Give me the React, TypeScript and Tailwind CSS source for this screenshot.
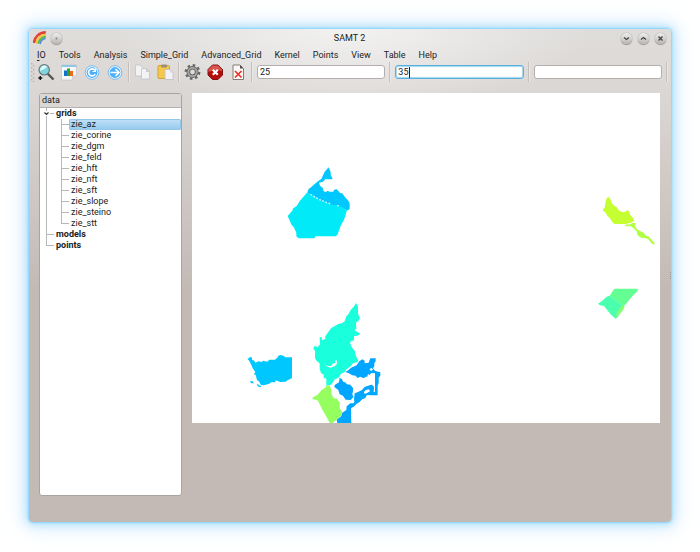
import React from "react";

const menus = ["Tools", "Analysis", "Simple_Grid", "Advanced_Grid", "Kernel", "Points", "View", "Table", "Help"];
const grids = ["zie_az", "zie_corine", "zie_dgm", "zie_feld", "zie_hft", "zie_nft", "zie_sft", "zie_slope", "zie_steino", "zie_stt"];

function RainbowIcon() {
  return (
    <svg viewBox="0 0 14 14" className="size-[14px]" fill="none" strokeWidth="2">
      <path d="M1 12C1.500 6 6 1.800 12.800 1.400" stroke="#e2403a" strokeWidth="2.600" />
      <path d="M3.300 12.300C4 7 7.500 4.200 12.800 3.600" stroke="#f6c93c" />
      <path d="M5.200 12.600C6 8.500 8.500 6.200 12.800 5.400" stroke="#62b54c" />
      <path d="M7 13C7.500 10 9.500 8 12.600 7.200" stroke="#5487d8" strokeWidth="1.600" />
    </svg>
  );
}

function RoundButton({ label, children }: { label: string; children: React.ReactNode }) {
  return (
    <button
      aria-label={label}
      className="flex size-[11px] items-center justify-center rounded-full bg-linear-to-b from-[#f0efee] to-[#b9b5b2] shadow-[0_1px_1px_#77777799,0_0_1px_#666]"
    >
      <svg viewBox="0 0 11 11" className="size-[11px]" fill="none" stroke="#444" strokeWidth="1.300">
        {children}
      </svg>
    </button>
  );
}

function ToolButton({ label, children }: { label: string; children: React.ReactNode }) {
  return (
    <button aria-label={label} className="size-[18px] shrink-0">
      <svg viewBox="0 0 18 18" className="size-[18px]">
        {children}
      </svg>
    </button>
  );
}

function Separator() {
  return <div className="mx-1 h-5 w-px shrink-0 bg-[#c4bfbc] shadow-[1px_0_0_#ebe9e7]" />;
}

function BlueDisc({ children }: { children: React.ReactNode }) {
  return (
    <>
      <circle cx="9" cy="9.500" r="6.800" fill="#f2faff" stroke="#79b9f0" strokeWidth="1" />
      <circle cx="9" cy="9.500" r="5.400" fill="#4db0fa" />
      <g fill="none" stroke="#fff" strokeWidth="1.600" transform="translate(0 .5)">
        {children}
      </g>
    </>
  );
}

function Toolbar() {
  const field = "h-[14px] w-full rounded-[3px] border bg-white px-[2px] text-[9px] leading-3 text-[#222] outline-none";
  return (
    <div className="flex items-center pl-[2px]" role="toolbar">
      <svg viewBox="0 0 4 20" className="mr-[2px] h-5 w-1 shrink-0" fill="#bab5b2">
        {[1, 5, 9, 13, 17].map((y) => (
          <g key={y}>
            <rect x="0" y={y} width="1.500" height="1.500" />
            <rect x="2" y={y + 2} width="1.500" height="1.500" />
          </g>
        ))}
      </svg>
      <div className="flex gap-[5px]">
        <ToolButton label="Zoom">
          <path d="M10.500 10.500L16.500 16.500" stroke="#555" strokeWidth="2.400" />
          <circle cx="7.200" cy="6.800" r="5.200" fill="#7ed6dc" stroke="#6b7779" strokeWidth="1.200" />
          <path d="M3 8C3 3.500 7 1.500 10 3.200C9 6 5.500 6.500 3 8Z" fill="#dffafa" />
          <path d="M3.300 13V17M1.300 15H5.300" stroke="#111" strokeWidth="1.400" />
        </ToolButton>
        <ToolButton label="Chart">
          <path d="M1.500 2H16.500V12L12 17H1.500Z" fill="#f7f7f7" stroke="#c8c8c8" strokeWidth=".8" />
          <path d="M1.500 2H16.500V4H1.500Z" fill="#8fc7ea" />
          <path d="M12 17V12.500H16.500Z" fill="#d5d5d5" />
          <path d="M4 7.500H7V13H4Z" fill="#1470c8" />
          <path d="M7 5.500H10V13H7Z" fill="#27a52e" />
          <path d="M10 8H13V13H10Z" fill="#ed6918" />
        </ToolButton>
        <ToolButton label="Reload">
          <BlueDisc>
            <path d="M11.800 6.700A3.500 3.500 0 1 0 12.200 10.500" />
            <path d="M12.400 5V8H9.500" strokeWidth="1.200" />
          </BlueDisc>
        </ToolButton>
        <ToolButton label="Forward">
          <BlueDisc>
            <path d="M4.500 9H13M9.500 5.500L13 9L9.500 12.500" />
          </BlueDisc>
        </ToolButton>
      </div>
      <Separator />
      <div className="flex gap-[5px]">
        <ToolButton label="Copy">
          <g fill="#f3f3f6" stroke="#c2c2ca" strokeWidth=".8">
            <path d="M2.500 2H7L9.500 4.500V13H2.500Z" />
            <path d="M8.500 5.500H13.500L16.500 8.500V16H8.500Z" />
            <path d="M13.500 5.500V8.500H16.500" fill="#d0d0d8" />
          </g>
        </ToolButton>
        <ToolButton label="Paste">
          <rect x="2" y="2.500" width="11.500" height="13" rx="1" fill="#f3c84b" stroke="#d3a234" />
          <rect x="5" y="1.500" width="6" height="3" rx="1" fill="#9a9078" />
          <path d="M9 6.500H14L17 9.500V16.500H9Z" fill="#f3f3f7" stroke="#bdbdc7" strokeWidth=".8" />
          <path d="M14 6.500V9.500H17" fill="#d4d4dc" />
        </ToolButton>
      </div>
      <Separator />
      <div className="flex gap-[5px]">
        <ToolButton label="Settings">
          <g fill="none" stroke="#666">
            <circle cx="9.500" cy="9" r="6.800" strokeWidth="2.200" strokeDasharray="2.600 2.740" />
            <circle cx="9.500" cy="9" r="4.200" stroke="#5d5d5d" strokeWidth="3.600" />
            <circle cx="9.500" cy="9" r="4.200" stroke="#a4a4a4" strokeWidth="2" />
          </g>
        </ToolButton>
        <ToolButton label="Stop">
          <path d="M6.500 2H12L16.500 6.500V12L12 16.500H6.500L2 12V6.500Z" fill="#b60c0c" stroke="#7d1414" />
          <path d="M6.500 2.500H12L16 6.500V8C11 6 7 7 2.500 9V6.500Z" fill="#d8554e" />
          <path d="M6.800 6.700L11.800 11.700M11.800 6.700L6.800 11.700" stroke="#fff" strokeWidth="2.200" />
        </ToolButton>
        <ToolButton label="Delete">
          <path d="M4 2H11L14.500 5.500V16.500H4Z" fill="#faf8f6" stroke="#857d75" />
          <path d="M11 2V5.500H14.500Z" fill="#57514b" />
          <path d="M6 8L12.500 14.500M12.500 8L6 14.500" stroke="#f12b20" strokeWidth="1.600" />
        </ToolButton>
      </div>
      <Separator />
      <div className="flex-1 pl-px">
        <input aria-label="First value" defaultValue="25" className={`${field} border-[#b3aeab]`} />
      </div>
      <Separator />
      <div className="relative flex-1 pl-px">
        <input
          aria-label="Second value"
          defaultValue="35"
          className={`${field} border-[#58aedc] shadow-[inset_0_0_1px_1px_#a4d7f2]`}
        />
        <span className="absolute top-[2px] left-[15px] h-[11px] w-px bg-[#222]" />
      </div>
      <Separator />
      <div className="flex-1 pl-px">
        <input aria-label="Third value" className={`${field} border-[#b3aeab]`} />
      </div>
      <Separator />
    </div>
  );
}

function TreePanel() {
  return (
    <aside className="flex w-[143px] shrink-0 flex-col overflow-hidden rounded-[3px] border border-[#aaa4a1] bg-white">
      <header className="h-[14px] border-b border-[#b5b0ad] bg-[#dad7d4] pl-[2px] leading-[13px]">data</header>
      <ul className="font-bold text-[#222]">
        <li>
          <button className="relative flex h-[11px] w-full items-center pl-4">
            <svg viewBox="0 0 16 11" className="absolute top-0 left-0 h-[11px] w-4" fill="none">
              <path d="M6.500 0V3M6.500 8V11M10 5.500H14" stroke="#b7b7b7" />
              <path d="M4.500 4.500L6.500 6.500L8.500 4.500" stroke="#333" strokeWidth="1.200" />
            </svg>
            grids
          </button>
          <ul className="ml-[6px] border-l border-[#b7b7b7] pl-[14px] font-normal">
            {grids.map((name, i) => (
              <li key={name} className="flex h-[11px]">
                <span className="flex w-2 shrink-0 flex-col">
                  <span className="h-[6px] border-b border-l border-[#b7b7b7]" />
                  {i < grids.length - 1 && <span className="h-[5px] border-l border-[#b7b7b7]" />}
                </span>
                <button
                  className={
                    i === 0
                      ? "flex flex-1 items-center rounded-[2px] bg-linear-to-b from-[#c2e2f8] to-[#93c8ee] pl-[2px] shadow-[inset_0_0_0_1px_#93c6e8]"
                      : "flex flex-1 items-center pl-[2px]"
                  }
                >
                  {name}
                </button>
              </li>
            ))}
          </ul>
        </li>
        {["models", "points"].map((name) => (
          <li key={name} className="flex h-[11px] pl-[6px]">
            <span className="flex w-2 shrink-0 flex-col">
              <span className="h-[6px] border-b border-l border-[#b7b7b7]" />
              {name === "models" && <span className="h-[5px] border-l border-[#b7b7b7]" />}
            </span>
            <button className="flex items-center pl-[2px]">{name}</button>
          </li>
        ))}
      </ul>
    </aside>
  );
}

function GridMap() {
  return (
    <svg viewBox="192 93 468 330" className="block h-auto w-full bg-white" role="img" aria-label="zie_az">
      <g transform="translate(270 155) scale(.3333)">
        <path fill="#00c8ff" d="M176 37L182 51V60L187 69V73H166L159 80L147 83L150 92L158 98L161 109L168 111L173 107L178 110H190L192 105L199 102L206 109L211 115L216 114L225 126L235 137L239 145V161L234 166L228 164L218 159L204 155L112 112L116 102L124 96L135 86L144 79L154 72L164 50Z" />
        <path fill="#00c8ff" d="M112 112L150 108L210 140L218 160L185 151L145 135Z" />
        <path fill="#00eaf8" d="M112 112L122 118L145 132L167 143L188 149L207 152L219 158L231 166L222 195L213 210L202 240L197 244H137L133 250H86L79 244V233L71 216L65 210L53 183L68 166V161L80 153L90 137Z" />
        <path stroke="#e8fbff" strokeWidth="4" strokeDasharray="5 5" fill="none" d="M122 118L137 128L154 136L169 142L185 147" />
        <path fill="#e8fbff" d="M201 150H206V154H201Z" />
      </g>
      <g transform="translate(240 290) scale(.3333)">
        <path fill="#00c8ff" d="M22 206L28 204L30 200L36 203V210L41 211L47 218L55 214L65 216L69 212L82 215L88 209H105L113 202L115 197L122 195L132 198L135 202H156V264L151 267L144 270L137 275L121 276L107 271L106 277H94L86 282L71 286L62 284L58 275L51 270L47 255L42 252L46 246L38 235L34 225L28 213Z" />
        <path fill="#00c8ff" d="M29 274H38L42 280H34ZM50 284L54 282L57 286L64 288L62 292L56 290Z" />
        <path fill="#1affdc" d="M349 39L354 50L354 72L360 83L357 91L348 98L349 116L343 121L353 126L361 132L352 137L342 138V151L333 154L330 160L337 174L344 182L348 198L355 212L351 217L339 219L333 228L320 237L315 245L303 251L298 261L283 269L274 284L264 286L259 288V266L251 263V254L243 249L239 236V220L230 213L225 205L225 182L220 177L223 168L233 171L240 163L239 142L245 141L246 151L256 147V139L273 115L295 102L306 100L314 94L319 79L325 73L332 60L341 50Z" />
        <path fill="#fff" d="M254 222L262 228L273 228L279 220H286V211L290 209L291 221L284 229L271 233L260 229Z" />
        <path fill="#00a6ff" d="M316 246L326 240L333 233L350 226L358 214L367 208L374 212V220L386 218L391 205H407V214L403 219V229L399 235L406 243L421 247V257L416 263V280L413 287V316H395L381 315L375 325L366 327L359 336L350 341L343 349L333 355L334 399H292L290 389L304 378L306 369L319 360L320 349L331 340H341L344 334V318L344 319L352 309L365 307L374 292L395 284L402 291L400 307L405 305V250L394 249L389 255L384 252L382 260H377L371 265L361 260L352 264L347 257L337 256L325 249Z" />
        <path fill="#00a6ff" d="M299 263L306 268L310 276L316 277L321 283L331 284L339 294V303L337 312L340 322L332 330L317 329L309 317L299 313L295 300L283 291L284 285L297 277Z" />
        <path fill="#00a6ff" d="M344 310L354 306L366 300L374 291L395 284L402 291L400 310L380 315L372 325L360 332L350 340L342 332Z" />
        <path fill="#fff" d="M372 306L377 300L387 298L390 304L380 310L373 311ZM388 237L396 234L399 239L393 243Z" />
        <path fill="#96ff60" d="M260 287L269 286L273 296L275 313L281 325L291 326L299 338L299 354L306 365L304 376L296 383L289 391L283 394L280 399H269L258 378L246 357L233 331L217 327L219 322L232 315L246 299L255 294Z" />
      </g>
      <g transform="translate(580 180) scale(.3333)">
        <path fill="#c5ff32" d="M85 50L92 59L94 67L101 76L110 82L119 94L132 97L143 91L149 96L150 104L159 113L163 122L152 128L137 132H104L97 127L91 116L82 107L76 97L69 92V87L74 83L76 69L80 55Z" />
        <path fill="#b0ff43" d="M134 134L153 133L155 129H167V133L164 137L171 148L182 154L191 158L198 167L205 169L215 179L224 189L222 194L216 191L204 177L194 174L183 173L173 166L170 154L157 142L153 139H136Z" />
        <path fill="#64ff92" d="M103 326H173V333L158 347L147 361L138 372L131 378L126 376L89 347Z" />
        <path fill="#4affad" d="M89 347L130 379L128 391L117 402L114 410L107 416L94 405L82 391L72 378L60 376L54 371L63 365L72 358L80 350Z" />
        <path fill="#85ff73" d="M121 382L129 374L134 378L130 389L119 402L115 409L108 409L111 397Z" />
      </g>
    </svg>
  );
}

export default function App() {
  return (
    <div className="flex min-h-screen flex-col bg-white px-[29px] pt-[29px] pb-[30px] font-['Roboto','Noto_Sans',sans-serif] text-[9px] leading-[11px] text-[#222]">
      <main className="relative flex flex-1 flex-col rounded-[4px] bg-[radial-gradient(ellipse_240px_80px_at_50%_0,#f2f2f1,#f2f2f100),linear-gradient(#dfdddb,#dad6d3_70px,#c3bab6_260px)] shadow-[0_0_2px_1px_#8bd3fb,0_0_9px_2px_#9edcfccc,0_0_20px_5px_#b5ddff99]">
        <header className="flex h-[18px] items-center px-1">
          <div className="flex flex-1 items-center gap-1">
            <RainbowIcon />
            <RoundButton label="Window menu">
              <circle cx="5.500" cy="5.500" r=".3" stroke="#777" />
            </RoundButton>
          </div>
          <h1>SAMT 2</h1>
          <div className="flex flex-1 justify-end gap-[6px] pr-px">
            <RoundButton label="Minimize">
              <path d="M3 4.500L5.500 6.500L8 4.500" />
            </RoundButton>
            <RoundButton label="Maximize">
              <path d="M3 6.500L5.500 4.500L8 6.500" />
            </RoundButton>
            <RoundButton label="Close">
              <path d="M3.500 3.500L7.500 7.500M7.500 3.500L3.500 7.500" />
            </RoundButton>
          </div>
        </header>
        <nav className="flex h-[15px] items-center gap-[13px] pt-[2px] pl-2">
          <button>
            <span className="underline underline-offset-2">I</span>O
          </button>
          {menus.map((name) => (
            <button key={name}>{name}</button>
          ))}
        </nav>
        <Toolbar />
        <div className="flex flex-1 gap-[10px] pt-[11px] pr-[11px] pb-[26px] pl-[10px]">
          <TreePanel />
          <section className="min-w-0 flex-1">
            <GridMap />
          </section>
        </div>
        <div className="absolute top-[243px] right-0 h-[7px] w-[2px] border-r border-dotted border-[#999]" />
      </main>
    </div>
  );
}
